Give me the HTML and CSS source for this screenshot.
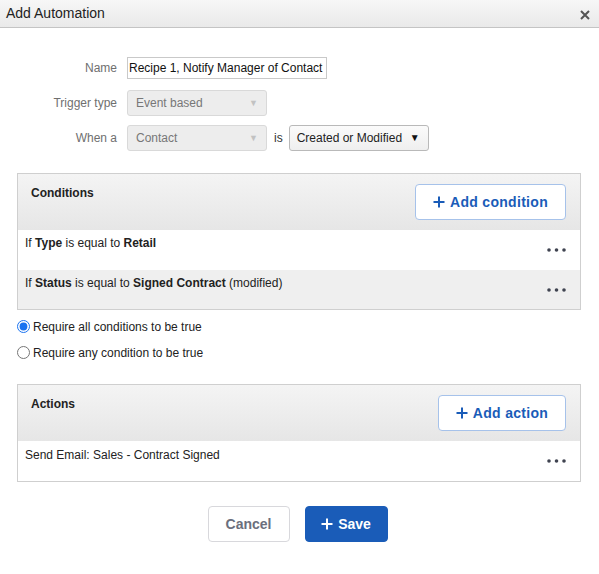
FILE: index.html
```html
<!DOCTYPE html>
<html>
<head>
<meta charset="utf-8">
<link rel="stylesheet" href="styles.css">
</head>
<body>
<div class="dialog">
  <div class="titlebar">
    <span class="title">Add Automation</span>
    <svg class="close" width="10" height="10" viewBox="0 0 10 10"><path d="M1 1L9 9M9 1L1 9" stroke="#555" stroke-width="2" stroke-linecap="butt"/></svg>
  </div>
  <div class="body">
    <div class="form">
      <div class="row">
        <label class="label">Name</label>
        <div class="field"><span class="input">Recipe 1, Notify Manager of Contact</span></div>
      </div>
      <div class="row">
        <label class="label">Trigger type</label>
        <div class="field"><span class="select disabled"><span>Event based</span><span class="arrow">▼</span></span></div>
      </div>
      <div class="row">
        <label class="label">When a</label>
        <div class="field">
          <span class="select disabled"><span>Contact</span><span class="arrow">▼</span></span>
          <span class="is">is</span>
          <span class="select active"><span>Created or Modified</span><span class="arrow">▼</span></span>
        </div>
      </div>
    </div>

    <div class="panel conditions">
      <div class="panel-head">
        <span class="panel-title">Conditions</span>
        <button class="add-btn add-condition"><svg width="12" height="12" viewBox="0 0 12 12"><path d="M6 0.5V11.5M0.5 6H11.5" stroke="currentColor" stroke-width="2"/></svg>Add condition</button>
      </div>
      <div class="item">
        <span class="item-text">If <b>Type</b> is equal to <b>Retail</b></span>
        <svg class="dots" width="19" height="4" viewBox="0 0 19 4"><circle cx="2" cy="2" r="1.8"/><circle cx="9.5" cy="2" r="1.8"/><circle cx="17" cy="2" r="1.8"/></svg>
      </div>
      <div class="item alt">
        <span class="item-text">If <b>Status</b> is equal to <b>Signed Contract</b> (modified)</span>
        <svg class="dots" width="19" height="4" viewBox="0 0 19 4"><circle cx="2" cy="2" r="1.8"/><circle cx="9.5" cy="2" r="1.8"/><circle cx="17" cy="2" r="1.8"/></svg>
      </div>
    </div>

    <div class="radios">
      <label class="radio"><input type="radio" name="req" checked><span>Require all conditions to be true</span></label>
      <label class="radio"><input type="radio" name="req"><span>Require any condition to be true</span></label>
    </div>

    <div class="panel actions">
      <div class="panel-head">
        <span class="panel-title">Actions</span>
        <button class="add-btn add-action"><svg width="12" height="12" viewBox="0 0 12 12"><path d="M6 0.5V11.5M0.5 6H11.5" stroke="currentColor" stroke-width="2"/></svg>Add action</button>
      </div>
      <div class="item">
        <span class="item-text item-text-action">Send Email: Sales - Contract Signed</span>
        <svg class="dots" width="19" height="4" viewBox="0 0 19 4"><circle cx="2" cy="2" r="1.8"/><circle cx="9.5" cy="2" r="1.8"/><circle cx="17" cy="2" r="1.8"/></svg>
      </div>
    </div>

    <div class="footer">
      <button class="btn cancel">Cancel</button>
      <button class="btn save"><svg width="12" height="12" viewBox="0 0 12 12"><path d="M6 0.5V11.5M0.5 6H11.5" stroke="currentColor" stroke-width="2"/></svg>Save</button>
    </div>
  </div>
</div>
</body>
</html>
```

FILE: styles.css
```css
* { box-sizing: border-box; }
html, body { margin: 0; padding: 0; background: #fff; }
body {
  font-family: "Liberation Sans", Arial, Helvetica, sans-serif;
  font-size: 12px;
  color: #222;
  width: 599px;
  height: 574px;
  overflow: hidden;
}
.dialog { width: 599px; height: 574px; background: #fff; }
.titlebar {
  height: 28px;
  background: linear-gradient(#f7f7f7, #e9e9e9);
  border-bottom: 1px solid #c4c4c4;
  display: flex;
  align-items: center;
  justify-content: space-between;
  padding: 0 9px 0 6px;
}
.title { font-size: 14px; color: #222; line-height: 16px; margin-top: -1px; }
.close { display: block; margin-top: 2px; }

.body { padding: 0 18px 0 17px; }

.form { padding-top: 22px; }
.row {
  display: grid;
  grid-template-columns: 100px auto;
  column-gap: 10px;
  align-items: center;
  height: 35px;
}
.label { text-align: right; color: #6f6f6f; font-size: 12px; }
.field { display: flex; align-items: center; }
.input {
  display: block;
  width: 200px;
  height: 22px;
  border: 1px solid #c9c9c9;
  padding: 0 1px;
  line-height: 20px;
  font-size: 12px;
  color: #111;
  white-space: nowrap;
  overflow: hidden;
}
.select {
  display: flex;
  align-items: center;
  justify-content: space-between;
  width: 140px;
  height: 26px;
  border-radius: 3px;
  padding: 0 8px 0 8px;
  font-size: 12px;
}
.select.disabled {
  background: #ededed;
  border: 1px solid #d9d9d9;
  color: #777;
}
.select.disabled .arrow { color: #c2c2c2; font-size: 9px; margin-right: 0; }
.select.active {
  background: linear-gradient(#fbfbfb, #efefef);
  border: 1px solid #b9b9b9;
  color: #222;
  padding-left: 7px;
}
.select.active .arrow { color: #111; font-size: 10px; margin-right: 0; }
.is { color: #333; margin: 0 6px 0 7px; }

.panel {
  border: 1px solid #cfcfcf;
  margin-top: 18px;
}
.panel.actions { margin-top: 25px; }
.panel-head {
  display: flex;
  justify-content: space-between;
  align-items: flex-start;
  height: 56px;
  padding: 10px 14px 10px 13px;
  background: linear-gradient(#f4f4f4, #e6e6e6);
}
.panel-title { font-weight: bold; font-size: 12px; line-height: 14px; margin-top: 2px; color: #222; }
.add-btn {
  display: flex;
  align-items: center;
  justify-content: center;
  gap: 5px;
  height: 36px;
  background: #fff;
  border: 1px solid #a6c2ea;
  border-radius: 4px;
  color: #1a5cb8;
  font-family: "Liberation Sans", Arial, sans-serif;
  font-weight: bold;
  font-size: 14px;
  letter-spacing: 0.3px;
  padding: 0;
  cursor: pointer;
}
.add-condition { width: 151px; }
.add-action { width: 128px; }
.add-btn svg { display: block; }

.item {
  display: flex;
  justify-content: space-between;
  align-items: center;
  height: 40px;
  padding: 0 14px 0 7px;
  background: #fff;
}
.item.alt { background: #efefef; height: 39px; }
.item-text { font-size: 12px; color: #222; line-height: 14px; align-self: flex-start; margin-top: 6px; }
.item-text-action { margin-top: 7px; }
.dots { display: block; fill: #3f4350; }

.radios { padding-top: 6px; }
.radio {
  display: flex;
  align-items: center;
  height: 13px;
  margin-top: 4px;
  font-size: 12px;
  color: #222;
}
.radio + .radio { margin-top: 13px; }
.radio input {
  margin: 0 3px 0 0;
  width: 13px;
  height: 13px;
  accent-color: #1a73f0;
}

.footer {
  display: flex;
  justify-content: center;
  gap: 15px;
  margin-top: 24px;
  padding-right: 3px;
}
.btn {
  height: 36px;
  width: 82px;
  border-radius: 4px;
  font-family: "Liberation Sans", Arial, sans-serif;
  font-weight: bold;
  font-size: 14px;
  display: flex;
  align-items: center;
  justify-content: center;
  gap: 5px;
  padding: 0;
  cursor: pointer;
}
.save { width: 83px; }
.cancel { background: #fff; border: 1px solid #d8d8dc; color: #6b6f7d; }
.save { background: #1a5cb8; border: 1px solid #1a5cb8; color: #fff; }
.save svg { display: block; }
```
